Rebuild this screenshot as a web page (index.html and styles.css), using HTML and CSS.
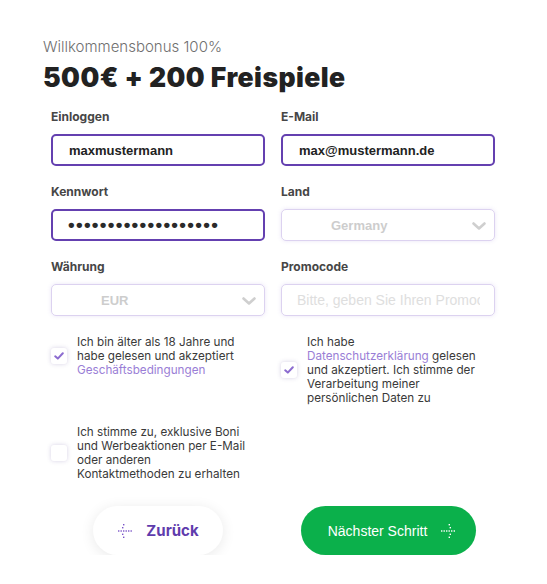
FILE: index.html
```html
<!DOCTYPE html>
<html lang="de">
<head>
<meta charset="utf-8">
<title>Registrierung</title>
<link rel="stylesheet" href="styles.css">
</head>
<body>
<main class="page">
  <header class="intro">
    <p class="subtitle">Willkommensbonus 100%</p>
    <h1 class="title">500€ + 200 Freispiele</h1>
  </header>

  <form class="form">
    <div class="fields">
      <label class="field">
        <span class="label">Einloggen</span>
        <span class="input active">maxmustermann</span>
      </label>
      <label class="field">
        <span class="label">E-Mail</span>
        <span class="input active">max@mustermann.de</span>
      </label>
      <label class="field">
        <span class="label">Kennwort</span>
        <span class="input active dots">•••••••••••••••••••</span>
      </label>
      <label class="field">
        <span class="label">Land</span>
        <span class="input select">Germany
          <svg class="chev" viewBox="0 0 14 8" width="14" height="8"><path d="M1.5 1.5 L7 6.5 L12.5 1.5" fill="none" stroke="#cfcfcf" stroke-width="2.6" stroke-linecap="round" stroke-linejoin="round"/></svg>
        </span>
      </label>
      <label class="field">
        <span class="label">Währung</span>
        <span class="input select">EUR
          <svg class="chev" viewBox="0 0 14 8" width="14" height="8"><path d="M1.5 1.5 L7 6.5 L12.5 1.5" fill="none" stroke="#cfcfcf" stroke-width="2.6" stroke-linecap="round" stroke-linejoin="round"/></svg>
        </span>
      </label>
      <label class="field">
        <span class="label">Promocode</span>
        <span class="input select placeholder"><span class="ph-text">Bitte, geben Sie Ihren Promocode ein</span></span>
      </label>
    </div>

    <div class="checks">
      <div class="check">
        <span class="box"><svg viewBox="0 0 10 8" width="10" height="8"><path d="M1.2 4.3 L3.8 6.6 L8.8 1.2" fill="none" stroke="#8c6cd0" stroke-width="2" stroke-linecap="round" stroke-linejoin="round"/></svg></span>
        <p class="check-text">Ich bin älter als 18 Jahre und habe gelesen und akzeptiert <a class="link" href="#">Geschäftsbedingungen</a></p>
      </div>
      <div class="check">
        <span class="box"><svg viewBox="0 0 10 8" width="10" height="8"><path d="M1.2 4.3 L3.8 6.6 L8.8 1.2" fill="none" stroke="#8c6cd0" stroke-width="2" stroke-linecap="round" stroke-linejoin="round"/></svg></span>
        <p class="check-text">Ich habe <a class="link" href="#">Datenschutzerklärung</a> gelesen und akzeptiert. Ich stimme der Verarbeitung meiner persönlichen Daten zu</p>
      </div>
      <div class="check">
        <span class="box"></span>
        <p class="check-text">Ich stimme zu, exklusive Boni und Werbeaktionen per E-Mail oder anderen Kontaktmethoden zu erhalten</p>
      </div>
    </div>

    <div class="actions">
      <div class="action-cell">
        <button type="button" class="btn back">
          <svg class="arrow" viewBox="0 0 16 16" width="16" height="16" fill="#7b55c8">
            <rect x="6" y="1" width="1.4" height="1.4"/>
            <rect x="5" y="4" width="1.4" height="1.4"/>
            <rect x="1" y="7.3" width="1.4" height="1.4"/>
            <rect x="3.5" y="7.3" width="1.4" height="1.4"/>
            <rect x="6" y="7.3" width="1.4" height="1.4"/>
            <rect x="8.5" y="7.3" width="1.4" height="1.4"/>
            <rect x="11" y="7.3" width="1.4" height="1.4"/>
            <rect x="13.5" y="7.3" width="1.4" height="1.4"/>
            <rect x="5" y="10.6" width="1.4" height="1.4"/>
            <rect x="6" y="13.6" width="1.4" height="1.4"/>
          </svg>
          <span>Zurück</span>
        </button>
      </div>
      <div class="action-cell">
        <button type="button" class="btn next">
          <span>Nächster Schritt</span>
          <svg class="arrow" viewBox="0 0 16 16" width="16" height="16" fill="#ffffff">
            <rect x="8.6" y="1" width="1.4" height="1.4"/>
            <rect x="9.6" y="4" width="1.4" height="1.4"/>
            <rect x="1" y="7.3" width="1.4" height="1.4"/>
            <rect x="3.5" y="7.3" width="1.4" height="1.4"/>
            <rect x="6" y="7.3" width="1.4" height="1.4"/>
            <rect x="8.5" y="7.3" width="1.4" height="1.4"/>
            <rect x="11" y="7.3" width="1.4" height="1.4"/>
            <rect x="13.6" y="7.3" width="1.4" height="1.4"/>
            <rect x="9.6" y="10.6" width="1.4" height="1.4"/>
            <rect x="8.6" y="13.6" width="1.4" height="1.4"/>
          </svg>
        </button>
      </div>
    </div>
  </form>
</main>
</body>
</html>
```

FILE: styles.css
```css
* { box-sizing: border-box; }

html, body {
  margin: 0;
  padding: 0;
  background: #ffffff;
}

body {
  font-family: "Inter", "Open Sans", sans-serif;
  color: #333;
}

.page {
  width: 547px;
  padding: 37px 52px 0 43px;
}

.intro { margin: 0; }

.subtitle {
  margin: 0;
  font-size: 15px;
  line-height: 20px;
  font-weight: 300;
  color: #6f6f6f;
}

.title {
  margin: 4px 0 0;
  font-size: 26.5px;
  line-height: 32px;
  font-weight: 900;
  color: #222;
  letter-spacing: 0.45px;
}

.form {
  padding: 0 0 0 8px;
  margin-top: 16px;
}

.fields {
  display: grid;
  grid-template-columns: 214px 214px;
  column-gap: 16px;
  row-gap: 18px;
}

.field {
  display: flex;
  flex-direction: column;
  gap: 9px;
}

.label {
  font-size: 12px;
  line-height: 16px;
  font-weight: 700;
  color: #464646;
}

.input {
  position: relative;
  display: flex;
  align-items: center;
  height: 32px;
  border-radius: 5px;
  font-family: "Liberation Sans", Arial, sans-serif;
  white-space: nowrap;
  overflow: hidden;
}

.input.active {
  border: 2px solid #6440b0;
  padding-left: 16px;
  font-size: 13px;
  font-weight: 700;
  color: #222;
}

.input.dots {
  font-size: 19px;
  letter-spacing: 1.3px;
  padding-left: 15px;
  color: #2a2a2a;
}

.input.select {
  border: 1px solid #dcd2f0;
  box-shadow: 0 0 4px rgba(140, 110, 210, 0.18);
  padding-left: 49px;
  font-size: 13px;
  font-weight: 700;
  color: #cdcdcd;
}

.input.placeholder {
  padding-left: 15px;
  font-size: 14px;
  font-weight: 400;
  color: #dedede;
}

.ph-text {
  display: block;
  width: 183px;
  overflow: hidden;
}

.chev {
  position: absolute;
  right: 8px;
  top: 12px;
}

.checks {
  margin-top: 19px;
  display: grid;
  grid-template-columns: 214px 214px;
  column-gap: 16px;
  row-gap: 20px;
  align-items: start;
}

.check {
  display: flex;
  align-items: center;
  gap: 10px;
}

.box {
  flex: none;
  width: 16px;
  height: 16px;
  border-radius: 3px;
  background: #fff;
  box-shadow: 0 0 4px rgba(90, 70, 150, 0.25);
  display: flex;
  align-items: center;
  justify-content: center;
}

.check-text {
  margin: 0;
  width: 171px;
  font-size: 11.7px;
  line-height: 14px;
  color: #3a3a3a;
}

.link {
  color: #9a7ed6;
  text-decoration: none;
}

.actions {
  margin-top: 25px;
  display: grid;
  grid-template-columns: 214px 214px;
  column-gap: 16px;
}

.action-cell {
  display: flex;
  justify-content: center;
}

.btn {
  height: 49px;
  border: none;
  border-radius: 25px;
  display: flex;
  align-items: center;
  justify-content: center;
  gap: 13px;
  cursor: pointer;
}

.btn.back {
  width: 130px;
  background: #fff;
  box-shadow: 0 2px 14px rgba(0, 0, 0, 0.09);
  color: #5f3cad;
  font-family: "Inter", sans-serif;
  font-size: 15px;
  font-weight: 700;
}

.btn.next {
  width: 175px;
  background: #0bb04b;
  color: #fff;
  font-family: "Liberation Sans", Arial, sans-serif;
  font-size: 14px;
  font-weight: 400;
  padding-left: 14px;
}
```
